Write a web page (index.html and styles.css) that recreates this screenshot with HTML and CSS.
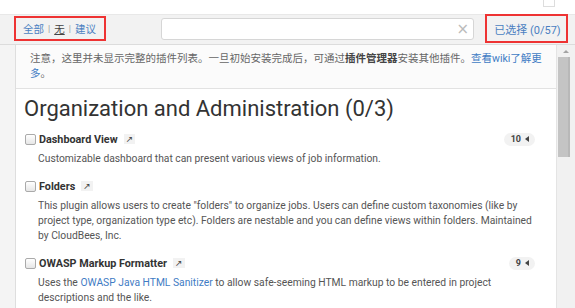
FILE: index.html
```html
<!DOCTYPE html>
<html lang="zh">
<head>
<meta charset="utf-8">
<link rel="stylesheet" href="styles.css">
</head>
<body>
<div class="top"><span class="corner"></span></div>
<div class="toolbar">
  <div class="filters">
    <a class="lnk">全部</a><span class="sep">|</span><a class="lnk cur">无</a><span class="sep">|</span><a class="lnk">建议</a>
  </div>
  <div class="search"><span class="clear">×</span></div>
  <div class="selected">已选择 (0/57)</div>
</div>
<div class="main">
  <div class="panel">
    <div class="notice">注意，这里并未显示完整的插件列表。一旦初始安装完成后，可通过<b>插件管理器</b>安装其他插件。<a class="lnk">查看wiki了解更多</a>。</div>
    <h1 class="cat">Organization and Administration (0/3)</h1>
    <div class="plugin">
      <div class="head"><span class="cb"></span><span class="name">Dashboard View</span><span class="ext">↗</span><span class="badge">10<i class="tri"></i></span></div>
      <p class="desc">Customizable dashboard that can present various views of job information.</p>
    </div>
    <div class="plugin">
      <div class="head"><span class="cb"></span><span class="name">Folders</span><span class="ext">↗</span></div>
      <p class="desc">This plugin allows users to create "folders" to organize jobs. Users can define custom taxonomies (like by project type, organization type etc). Folders are nestable and you can define views within folders. Maintained by CloudBees, Inc.</p>
    </div>
    <div class="plugin">
      <div class="head"><span class="cb"></span><span class="name">OWASP Markup Formatter</span><span class="ext">↗</span><span class="badge">9<i class="tri"></i></span></div>
      <p class="desc">Uses the <a class="lnk">OWASP Java HTML Sanitizer</a> to allow safe-seeming HTML markup to be entered in project descriptions and the like.</p>
    </div>
  </div>
  <div class="scrollbar">
    <div class="arrow"></div>
    <div class="thumb"></div>
  </div>
</div>
</body>
</html>
```
FILE: styles.css
```css
html, body {
  margin: 0;
  padding: 0;
  height: 100%;
  overflow: hidden;
}
body {
  font-family: Roboto, "Noto Sans CJK SC", sans-serif;
  font-size: 10.3px;
  color: #555;
  background: #f4f4f4;
}
.top {
  height: 14px;
  background: #fff;
  display: flex;
  justify-content: flex-end;
  padding-right: 20px;
}
.corner {
  width: 10px;
  height: 6px;
  border: 1px solid #ddd;
  border-top: none;
  background: #fff;
}
.toolbar {
  height: 29px;
  display: flex;
  align-items: flex-start;
  background: #f2f2f2;
  border-bottom: 1px solid #dcdcdc;
  border-top: 1px solid #e8e8e8;
}
.filters {
  margin-left: 14px;
  margin-top: 1px;
  width: 81px;
  height: 21px;
  border: 2px solid #ee3333;
  display: flex;
  align-items: center;
  padding-left: 7px;
  font-size: 10.5px;
}
.filters .lnk { color: #4a7fc1; }
.filters .cur { color: #444; text-decoration: underline; }
.sep { color: #999; margin: 0 4px; font-size: 9px; }
.lnk { color: #3f7cc4; text-decoration: none; }
.search {
  margin-left: 55px;
  margin-top: 3px;
  width: 311px;
  height: 20px;
  background: #fff;
  border: 1px solid #d6d6d6;
  border-radius: 3px;
  display: flex;
  align-items: center;
  justify-content: flex-end;
}
.clear {
  color: #bbb;
  font-size: 15px;
  margin-right: 4px;
  font-family: "DejaVu Sans", sans-serif;
}
.selected {
  margin-left: 11px;
  margin-top: -1px;
  width: 77px;
  height: 25px;
  border: 2px solid #ee3333;
  display: flex;
  align-items: center;
  justify-content: center;
  padding-left: 2px;
  color: #4a7fc1;
  font-size: 11px;
  white-space: nowrap;
}
.main {
  display: flex;
  height: 264px;
  margin-left: 15px;
}
.panel {
  flex: 1;
  background: #fff;
  border-left: 1px solid #dedede;
  overflow: hidden;
}
.notice {
  background: #fbfbfb;
  color: #666;
  font-size: 10.5px;
  padding: 6px 10px 6px 14px;
  line-height: 15px;
  border-bottom: 1px solid #e2e2e2;
  height: 31px;
}
.notice b { color: #444; }
.cat {
  font-family: Roboto, sans-serif;
  font-weight: 400;
  font-size: 22px;
  line-height: 26px;
  color: #333;
  margin: 7px 0 7px 8px;
}
.plugin {
  padding: 0 21px 10px 9px;
}
.head {
  display: flex;
  align-items: center;
  height: 20px;
}
.cb {
  width: 9px;
  height: 9px;
  border: 1px solid #aaa;
  border-radius: 2px;
  background: linear-gradient(#fff, #e6e6e6);
  margin-right: 3px;
}
.name {
  font-weight: 700;
  color: #333;
  font-size: 10.8px;
}
.ext {
  margin-left: 6px;
  font-size: 9px;
  color: #444;
  background: #f2f2f2;
  padding: 0 2px;
  font-family: "DejaVu Sans", sans-serif;
}
.badge {
  margin-left: auto;
  background: #f2f2f2;
  border-radius: 7px;
  height: 13px;
  padding: 0 6px 0 7px;
  font-size: 9px;
  font-weight: 700;
  color: #444;
  display: flex;
  align-items: center;
}
.tri {
  width: 0;
  height: 0;
  border-top: 3px solid transparent;
  border-bottom: 3px solid transparent;
  border-right: 4px solid #444;
  margin-left: 4px;
}
.desc {
  margin: 0;
  padding: 2px 0 0 13px;
  line-height: 15px;
  color: #555;
}
.scrollbar {
  width: 18px;
  background: #f1f1f1;
  border-left: 1px solid #e4e4e4;
}
.arrow {
  width: 0;
  height: 0;
  margin: 5px auto 0 6px;
  border-left: 3px solid transparent;
  border-right: 3px solid transparent;
  border-bottom: 3px solid #a3a3a3;
}
.thumb {
  margin: 4px 0 0 1px;
  width: 10px;
  height: 100px;
  background: #c4c4c4;
  border-right: 2px solid #b8b8b8;
}
```
